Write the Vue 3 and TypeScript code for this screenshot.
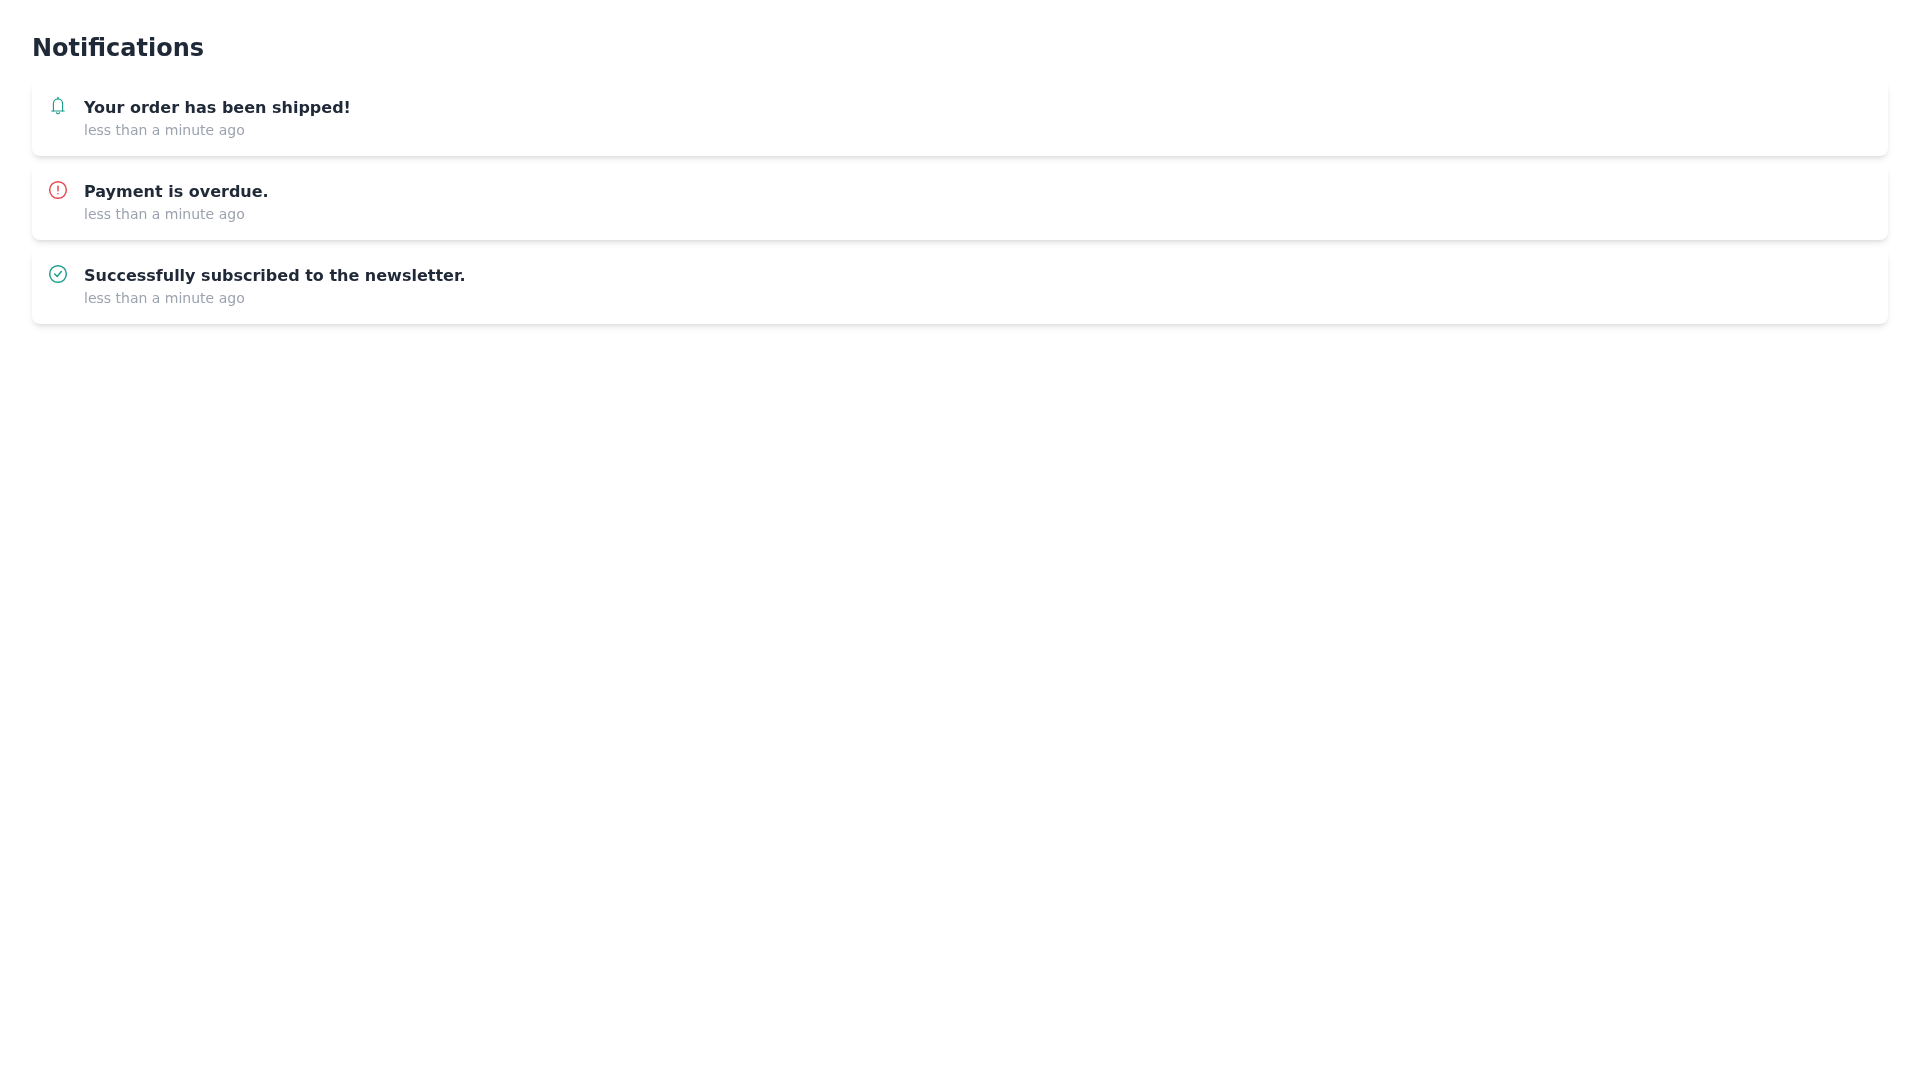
<script setup lang="ts">
interface Note { id: number; kind: 'bell' | 'alert' | 'check'; title: string; time: string }
const notes: Note[] = [
  { id: 1, kind: 'bell', title: 'Your order has been shipped!', time: 'less than a minute ago' },
  { id: 2, kind: 'alert', title: 'Payment is overdue.', time: 'less than a minute ago' },
  { id: 3, kind: 'check', title: 'Successfully subscribed to the newsletter.', time: 'less than a minute ago' },
]
</script>

<template>
  <main class="page">
    <h1 class="heading">Notifications</h1>
    <ul class="list">
      <li v-for="n in notes" :key="n.id" class="card">
        <svg class="icon" :class="n.kind" viewBox="0 0 24 24" fill="none" stroke="currentColor" stroke-width="1.75" stroke-linecap="round" stroke-linejoin="round">
          <template v-if="n.kind === 'bell'">
            <path class="thin" d="M12 1.5V3.5" />
            <path class="thin" d="M6.5 18V9a5.5 5.5 0 0 1 11 0v9" />
            <path class="thin" d="M4.5 18h15" />
            <path class="thin" d="M10.2 20a2 2 0 0 0 3.6 0" />
          </template>
          <template v-else-if="n.kind === 'alert'">
            <circle cx="12" cy="12" r="10" />
            <line x1="12" y1="7.5" x2="12" y2="13" />
            <line x1="12" y1="16.5" x2="12.01" y2="16.5" />
          </template>
          <template v-else>
            <circle cx="12" cy="12" r="10" />
            <path d="m8 12 3 3 5-6" />
          </template>
        </svg>
        <div class="body">
          <p class="title">{{ n.title }}</p>
          <p class="time">{{ n.time }}</p>
        </div>
      </li>
    </ul>
  </main>
</template>

<style>
html, body { margin: 0; background: #fff; }
</style>

<style scoped>
.page {
  padding: 32px;
  font-family: "DejaVu Sans", sans-serif;
  will-change: transform;
}
.heading {
  margin: 0 0 16px;
  font-size: 24px;
  line-height: 32px;
  font-weight: 700;
  color: #1f2937;
}
.list {
  list-style: none;
  margin: 0;
  padding: 0;
  display: flex;
  flex-direction: column;
  gap: 8px;
}
.card {
  display: flex;
  align-items: flex-start;
  gap: 16px;
  padding: 16px;
  background: #fff;
  border-radius: 8px;
  box-shadow: 0 4px 6px -1px rgba(0, 0, 0, 0.1), 0 2px 4px -2px rgba(0, 0, 0, 0.1);
}
.icon { width: 20px; height: 20px; flex: none; }
.thin { stroke-width: 1.4; }
.bell, .check { color: #1f9d8e; }
.alert { color: #e5484d; }
.title {
  margin: 0;
  font-size: 16px;
  line-height: 24px;
  font-weight: 700;
  color: #1f2937;
}
.time {
  margin: 0;
  font-size: 14px;
  line-height: 20px;
  color: #9ca3af;
}
</style>
